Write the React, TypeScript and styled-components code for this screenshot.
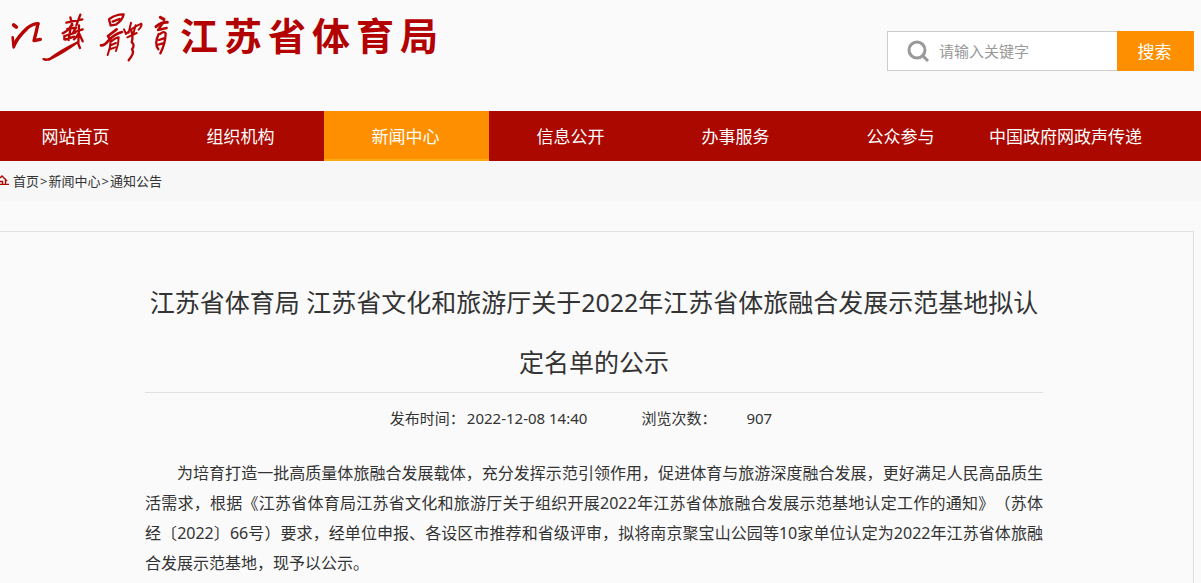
import React from "react";
import styled, { createGlobalStyle } from "styled-components";

const GlobalStyle = createGlobalStyle`
  *, *::before, *::after { box-sizing: border-box; }
  body {
    margin: 0;
    background: #fafafa;
    color: #333;
    font-family: "Noto Sans", "Noto Sans CJK SC", sans-serif;
    font-size: 16px;
    overflow-x: hidden;
    text-spacing-trim: space-all;
  }
  h1, p, ul, ol { margin: 0; padding: 0; font-weight: 400; }
  ul, ol { list-style: none; }
  a { color: inherit; text-decoration: none; }
`;

const Header = styled.header`
  display: flex;
  justify-content: space-between;
  align-items: flex-start;
  height: 111px;
  padding-right: 7px;
`;

const Brand = styled.a`
  display: flex;
  align-items: flex-start;
  color: #b30000;
`;

const BrushMark = styled.svg`
  display: block;
  width: 180px;
  height: 75px;
  fill: none;
  stroke: #b70505;
  stroke-linecap: round;
  stroke-linejoin: round;
`;

const BrandName = styled.span`
  font-family: "Noto Sans CJK SC", sans-serif;
  font-size: 38px;
  font-weight: 700;
  line-height: 68px;
  letter-spacing: 6px;
  white-space: nowrap;
`;

const SearchForm = styled.form`
  display: flex;
  height: 40px;
  margin-top: 31px;
`;

const SearchField = styled.label`
  display: flex;
  align-items: center;
  gap: 9px;
  width: 230px;
  padding-left: 19px;
  border: 1px solid #ccc;
  border-right: 0;
  background: #fff;

  svg { flex: none; }
`;

const SearchInput = styled.input`
  flex: 1;
  min-width: 0;
  height: 38px;
  padding: 0;
  border: 0;
  outline: 0;
  background: transparent;
  color: #333;
  font: inherit;
  font-size: 15px;

  &::placeholder { color: #999; opacity: 1; }
`;

const SearchButton = styled.button`
  width: 77px;
  padding: 0 2px 2px 0;
  border: 0;
  background: #fd8f01;
  color: #fff;
  font: inherit;
  font-size: 17px;
  cursor: pointer;
`;

const Nav = styled.nav`
  background: #ab0800;
`;

const NavList = styled.ul`
  display: flex;
  margin-left: -6px;
`;

const NavItem = styled.li`
  flex: 0 1 165px;
`;

const NavLink = styled.a<{ $active?: boolean }>`
  display: block;
  height: 50px;
  padding-right: 2px;
  border-bottom: 2px solid ${(p) => (p.$active ? "#f8ab16" : "transparent")};
  background: ${(p) => (p.$active ? "#fd8f01" : "transparent")};
  color: #fff;
  font-size: 17px;
  line-height: 52px;
  text-align: center;
  white-space: nowrap;
`;

const Breadcrumb = styled.nav`
  display: flex;
  align-items: center;
  gap: 4px;
  height: 40px;
  padding-bottom: 2px;
  background: #f7f7f7;
  font-size: 13px;

  svg { display: block; }
`;

const Separator = styled.span`
  padding: 0 1px;
`;

const Article = styled.article`
  margin: 30px 7px 0 0;
  padding: 40px 150px 5px 145px;
  border: solid #e0e0e0;
  border-width: 1px 1px 0 0;
`;

const Title = styled.h1`
  border-bottom: 1px solid #e0e0e0;
  font-size: 25px;
  line-height: 60px;
  text-align: center;
`;

const Meta = styled.div`
  display: flex;
  justify-content: center;
  gap: 54px;
  padding-right: 26px;
  margin-bottom: 15px;
  font-size: 15px;
  line-height: 50px;
`;

const MetaEntry = styled.span<{ $gap: number }>`
  display: flex;
  gap: ${(p) => p.$gap}px;
`;

const Body = styled.p`
  line-height: 30px;
  text-align: justify;
  text-indent: 2em;
`;

const navItems = [
  "网站首页",
  "组织机构",
  "新闻中心",
  "信息公开",
  "办事服务",
  "公众参与",
  "中国政府网政声传递",
];

function Calligraphy() {
  return (
    <BrushMark viewBox="0 0 540 225" aria-hidden="true">
      <g strokeWidth="8">
        <path d="M41 75 L49 81" strokeWidth="11" />
        <path d="M38 112 L41 142 Q52 112 80 88" />
        <path d="M43 133 Q54 110 82 84 Q98 71 114 71" strokeWidth="10" />
        <path d="M114 71 Q110 92 102 122 L121 118" strokeWidth="10" />
        <path d="M199 68 L247 58 M211 52 L217 76 M241 44 L229 76" strokeWidth="7" />
        <path d="M214 76 Q206 92 188 100 M202 87 L228 83 L218 100 M194 108 L226 98 M211 88 L206 120 M196 119 L222 110 M193 108 L193 118" strokeWidth="7" />
        <path d="M224 96 L248 88 M237 76 L235 132 L240 144 M236 100 Q229 112 222 118 M238 102 L248 124" strokeWidth="7" />
        <path d="M130 177 Q134 183 148 177 Q182 151 232 127 Q196 154 148 179 Z" fill="#b70505" strokeWidth="6" />
      </g>
      <g strokeWidth="7">
        <path d="M327 58 L332 76 M329 56 Q350 42 371 43 Q367 62 347 74 L334 76 M338 65 L358 57" />
        <path d="M303 136 Q312 138 326 121 Q344 102 366 96 M328 105 L350 88 M324 108 L330 118" strokeWidth="8" />
        <path d="M332 120 Q332 142 323 165 M334 124 Q350 112 356 112 Q356 133 348 153 M334 135 L348 129 M331 147 L346 142" strokeWidth="6" />
        <path d="M372 88 L378 102 Q398 82 424 71 Q427 78 416 89 M393 68 L386 98 M407 76 L399 104 M382 112 L410 99" strokeWidth="6" />
        <path d="M394 92 Q400 112 395 127 Q406 134 396 148 Q405 157 386 181" />
        <path d="M481 52 L492 58 M468 80 Q484 66 502 67" strokeWidth="9" />
        <path d="M488 70 L474 90 L500 84" />
        <path d="M476 102 Q462 132 475 148 M480 102 Q492 92 497 100 Q496 132 481 160 M477 120 L491 115 M475 134 L489 130" />
      </g>
    </BrushMark>
  );
}

export default function App() {
  return (
    <>
      <GlobalStyle />
      <Header>
        <Brand href="#">
          <Calligraphy />
          <BrandName>江苏省体育局</BrandName>
        </Brand>
        <SearchForm onSubmit={(e) => e.preventDefault()}>
          <SearchField>
            <svg width="23" height="22" viewBox="0 0 23 22" fill="none" stroke="#999" aria-hidden="true">
              <circle cx="10" cy="10" r="8" strokeWidth="3" />
              <path d="M15 15 L21 21" strokeWidth="3" />
            </svg>
            <SearchInput type="text" placeholder="请输入关键字" aria-label="请输入关键字" />
          </SearchField>
          <SearchButton type="submit">搜索</SearchButton>
        </SearchForm>
      </Header>
      <Nav>
        <NavList>
          {navItems.map((label) => (
            <NavItem key={label}>
              <NavLink href="#" $active={label === "新闻中心"}>{label}</NavLink>
            </NavItem>
          ))}
        </NavList>
      </Nav>
      <Breadcrumb>
        <svg width="9" height="10" viewBox="0 0 9 10" fill="none" stroke="#ab0800" aria-hidden="true">
          <path d="M0 3 L2 1 L7 6 M0 9.5 H9 M5.5 5 V9 M0 6.5 H2.5 V9" strokeWidth="1.4" />
        </svg>
        <span>
          <a href="#">首页</a>
          <Separator>&gt;</Separator>
          <a href="#">新闻中心</a>
          <Separator>&gt;</Separator>
          <a href="#">通知公告</a>
        </span>
      </Breadcrumb>
      <Article>
        <Title>江苏省体育局 江苏省文化和旅游厅关于2022年江苏省体旅融合发展示范基地拟认定名单的公示</Title>
        <Meta>
          <MetaEntry $gap={2}>
            <span>发布时间：</span>
            <time>2022-12-08 14:40</time>
          </MetaEntry>
          <MetaEntry $gap={30}>
            <span>浏览次数：</span>
            <span>907</span>
          </MetaEntry>
        </Meta>
        <Body>
          为培育打造一批高质量体旅融合发展载体，充分发挥示范引领作用，促进体育与旅游深度融合发展，更好满足人民高品质生活需求，根据《江苏省体育局江苏省文化和旅游厅关于组织开展2022年江苏省体旅融合发展示范基地认定工作的通知》（苏体经〔2022〕66号）要求，经单位申报、各设区市推荐和省级评审，拟将南京聚宝山公园等10家单位认定为2022年江苏省体旅融合发展示范基地，现予以公示。
        </Body>
      </Article>
    </>
  );
}
